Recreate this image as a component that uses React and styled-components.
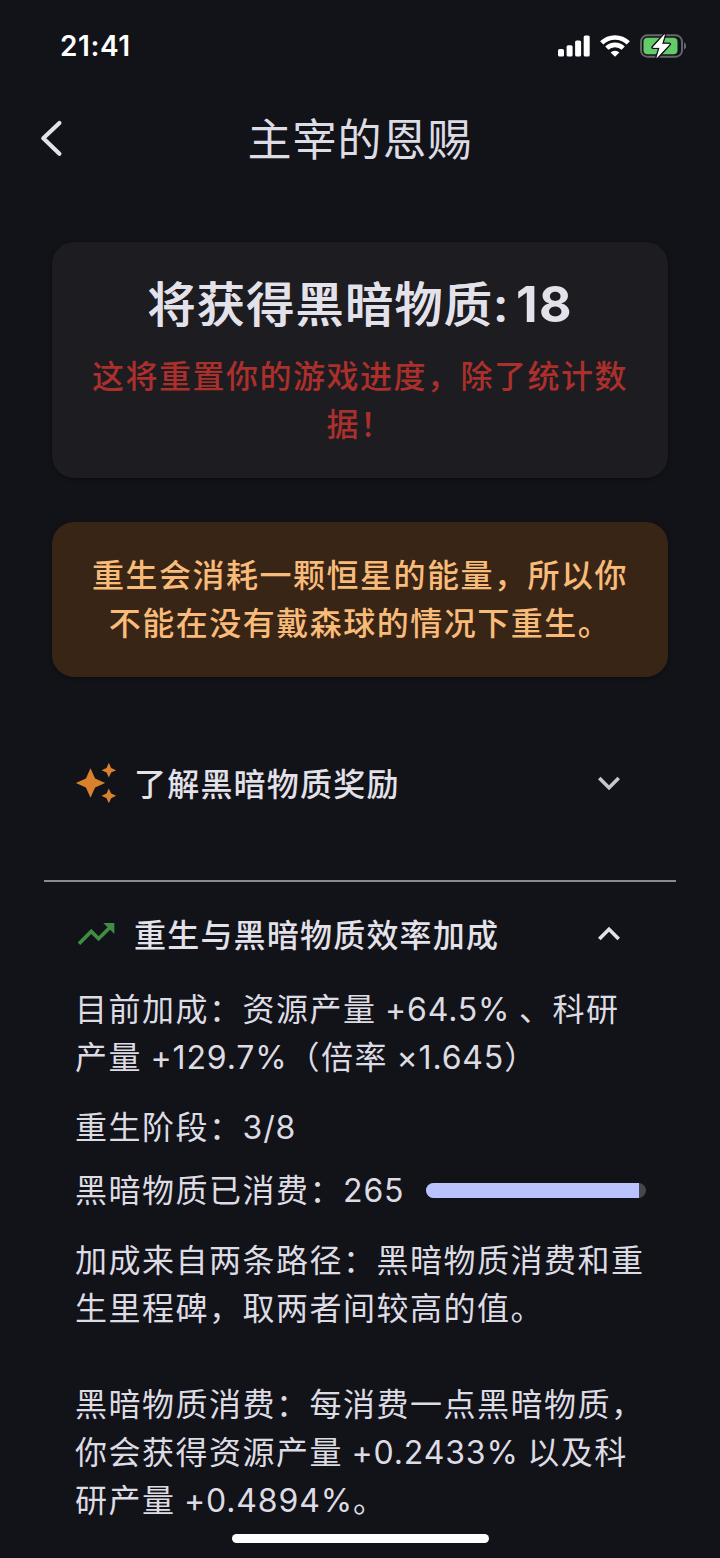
import React from 'react';
import styled, { createGlobalStyle } from 'styled-components';

const Global = createGlobalStyle`
  * { box-sizing: border-box; }
  html, body { margin: 0; background: #121318; }
  body { font-family: Inter, "Noto Sans CJK SC", sans-serif; color: #e3e1e9; }
  p, h1, h2, h3 { margin: 0; font-weight: inherit; }
  svg { display: block; flex: none; }
`;

const Screen = styled.div`
  width: 720px;
  height: 1558px;
  overflow: hidden;
  background: #121318;
  display: flex;
  flex-direction: column;
`;

const StatusBar = styled.header`
  height: 92px;
  flex: none;
  padding: 0 34px 0 60px;
  display: flex;
  align-items: center;
  justify-content: space-between;
`;

const Clock = styled.span`
  font-size: 28px;
  font-weight: 600;
  line-height: 32px;
  letter-spacing: 0.6px;
  color: #fff;
`;

const StatusIcons = styled.div`
  display: flex;
  align-items: center;
  gap: 10px;
`;

const NavBar = styled.nav`
  height: 92px;
  flex: none;
  padding: 0 40px;
  display: grid;
  grid-template-columns: 24px 1fr 24px;
  align-items: center;
`;

const NavTitle = styled.h1`
  padding-top: 3px;
  text-align: center;
  font-size: 44px;
  line-height: 60px;
  font-weight: 400;
  letter-spacing: 1px;
  color: #dddbe3;
`;

const Card = styled.section`
  margin: ${p => p.$top}px 52px 0;
  height: ${p => p.$height}px;
  flex: none;
  padding-top: 30px;
  border-radius: 22px;
  background: ${p => p.$bg};
  color: ${p => p.$color};
  box-shadow: 0 1px 4px rgba(0, 0, 0, 0.4);
  text-align: center;
`;

const Amount = styled.h2`
  display: flex;
  justify-content: center;
  align-items: baseline;
  gap: 7px;
  height: 64px;
  font-size: 48px;
  line-height: 64px;
  font-weight: 600;
  white-space: nowrap;
  margin-bottom: 17px;
`;

const AmountLabel = styled.span`
  font-weight: 500;
  letter-spacing: 1.4px;
  text-shadow: 0.7px 0 currentColor;
`;

const AmountValue = styled.span`
  font-size: 50px;
  font-weight: 700;
  letter-spacing: 1.4px;
`;

const Warning = styled.div`
  color: #ab2f2b;
`;

const Line = styled.p`
  font-size: 32px;
  line-height: 48px;
  font-weight: ${p => p.$weight || 400};
  letter-spacing: 1.5px;
  word-spacing: -2px;
  white-space: nowrap;
`;

const Num = styled.span`
  letter-spacing: 0.85px;
`;

const SectionHead = styled.div`
  height: 48px;
  margin-top: ${p => p.$top}px;
  flex: none;
  padding: 0 89px 0 74px;
  display: flex;
  align-items: center;
  gap: 16px;
`;

const SectionTitle = styled.h3`
  flex: 1;
  padding-top: 3px;
  font-size: 32px;
  line-height: 48px;
  font-weight: 500;
  letter-spacing: 1.2px;
`;

const Divider = styled.hr`
  width: 632px;
  height: 2px;
  flex: none;
  margin: 73px 44px 0;
  border: 0;
  background: #8a8a93;
`;

const Details = styled.div`
  flex: 1;
  padding: 28px 74px 0 75px;
  color: #dddbe3;
`;

const Paragraph = styled.div`
  margin-bottom: ${p => p.$gap}px;
`;

const SpentRow = styled.div`
  display: flex;
  align-items: center;
  justify-content: space-between;
  margin-bottom: 22px;
`;

const Track = styled.div`
  width: 220px;
  height: 15px;
  margin-bottom: 1px;
  border-radius: 8px;
  overflow: hidden;
  background: #46464b;
`;

const Fill = styled.div`
  height: 100%;
  background: #bac3ff;
`;

const HomeIndicator = styled.div`
  width: 257px;
  height: 9px;
  flex: none;
  margin: 0 auto 15px;
  border-radius: 5px;
  background: #fff;
`;

const Signal = () => (
  <svg width="32" height="22" viewBox="0 0 32 22" fill="#fff">
    <rect x="0" y="14" width="6" height="7.6" rx="1.6" />
    <rect x="8.6" y="10.2" width="6" height="11.4" rx="1.6" />
    <rect x="17.1" y="5.4" width="6" height="16.2" rx="1.6" />
    <rect x="25.7" y="0.4" width="6" height="21.2" rx="1.6" />
  </svg>
);

const Wifi = () => (
  <svg width="30" height="22" viewBox="0 0 30 22" fill="none" stroke="#fff" strokeWidth="4.6">
    <path d="M1.7 7.9a19 19 0 0 1 26.6 0" />
    <path d="M6.8 13.2a11.8 11.8 0 0 1 16.4 0" />
    <path d="M15 21.8l-4.4-4.3a6.3 6.3 0 0 1 8.8 0z" fill="#fff" stroke="none" />
  </svg>
);

const Battery = () => (
  <svg width="46" height="26" viewBox="0 0 46 26">
    <rect x="1" y="2.2" width="41" height="21.6" rx="6.4" fill="none" stroke="#66676b" strokeWidth="1.9" />
    <path d="M44 9.3q2.2 1.3 2.2 3.7T44 16.7z" fill="#66676b" />
    <rect x="3.5" y="4.7" width="34" height="16.6" rx="4" fill="#63cb68" />
    <path
      d="M24.6 1.6L13 14.4h7L16.9 24.6 29.4 11.2h-7.7z"
      fill="#fff"
      stroke="#121318"
      strokeWidth="3.4"
      strokeLinejoin="round"
      paintOrder="stroke"
    />
    <path d="M24.6 1.6L13 14.4h7L16.9 24.6 29.4 11.2h-7.7z" fill="#fff" stroke="#fff" strokeWidth="0.6" strokeLinejoin="round" />
  </svg>
);

const BackIcon = () => (
  <svg width="24" height="40" viewBox="0 0 24 40" fill="none" stroke="#e3e1e9" strokeWidth="4.2" strokeLinecap="round" strokeLinejoin="round">
    <path d="M19.4 5L3.3 20.2l16.1 15.6" />
  </svg>
);

const Glyph = ({ d, color }) => (
  <svg width="44" height="44" viewBox="0 0 24 24" fill={color}>
    <path d={d} />
  </svg>
);

const SPARKLE =
  'M19 9l1.25-2.75L23 5l-2.75-1.25L19 1l-1.25 2.75L15 5l2.75 1.25L19 9zm-7.5.5L9 4 6.5 9.5 1 12l5.5 2.5L9 20l2.5-5.5L17 12l-5.5-2.5zM19 15l-1.25 2.75L15 19l2.75 1.25L19 23l1.25-2.75L23 19l-2.75-1.25L19 15z';
const TREND = 'M16 6l2.29 2.29-4.88 4.88-4-4L2 16.59 3.41 18l6-6 4 4 6.3-6.29L22 12V6z';
const MORE = 'M16.59 8.59L12 13.17 7.41 8.59 6 10l6 6 6-6z';
const LESS = 'M12 8l-6 6 1.41 1.41L12 10.83l4.59 4.58L18 14z';

export default function App() {
  return (
    <Screen>
      <Global />
      <StatusBar>
        <Clock>21:41</Clock>
        <StatusIcons>
          <Signal />
          <Wifi />
          <Battery />
        </StatusIcons>
      </StatusBar>
      <NavBar>
        <BackIcon />
        <NavTitle>主宰的恩赐</NavTitle>
      </NavBar>

      <Card $top={58} $height={236} $bg="#1d1c21" $color="#e3e1e9">
        <Amount>
          <AmountLabel>将获得黑暗物质:</AmountLabel>
          <AmountValue>18</AmountValue>
        </Amount>
        <Warning>
          <Line $weight={500}>这将重置你的游戏进度，除了统计数</Line>
          <Line $weight={500}>据！</Line>
        </Warning>
      </Card>

      <Card $top={44} $height={155} $bg="#382516" $color="#f9bb79">
        <Line $weight={500}>重生会消耗一颗恒星的能量，所以你</Line>
        <Line $weight={500}>不能在没有戴森球的情况下重生。</Line>
      </Card>

      <SectionHead $top={82}>
        <Glyph d={SPARKLE} color="#d9822b" />
        <SectionTitle>了解黑暗物质奖励</SectionTitle>
        <Glyph d={MORE} color="#c6c5d0" />
      </SectionHead>
      <Divider />
      <SectionHead $top={28}>
        <Glyph d={TREND} color="#3f8c43" />
        <SectionTitle>重生与黑暗物质效率加成</SectionTitle>
        <Glyph d={LESS} color="#e3e1e9" />
      </SectionHead>

      <Details>
        <Paragraph $gap={22}>
          <Line>目前加成：资源产量 <Num>+64.5%</Num> 、科研</Line>
          <Line>产量 <Num>+129.7%</Num>（倍率 <Num>×1.645</Num>）</Line>
        </Paragraph>
        <Paragraph $gap={15}>
          <Line>重生阶段：<Num>3/8</Num></Line>
        </Paragraph>
        <SpentRow>
          <Line>黑暗物质已消费：<Num>265</Num></Line>
          <Track>
            <Fill style={{ width: '97%' }} />
          </Track>
        </SpentRow>
        <Paragraph $gap={48}>
          <Line>加成来自两条路径：黑暗物质消费和重</Line>
          <Line>生里程碑，取两者间较高的值。</Line>
        </Paragraph>
        <Line>黑暗物质消费：每消费一点黑暗物质，</Line>
        <Line>你会获得资源产量 <Num>+0.2433%</Num> 以及科</Line>
        <Line>研产量 <Num>+0.4894%</Num>。</Line>
      </Details>
      <HomeIndicator />
    </Screen>
  );
}
